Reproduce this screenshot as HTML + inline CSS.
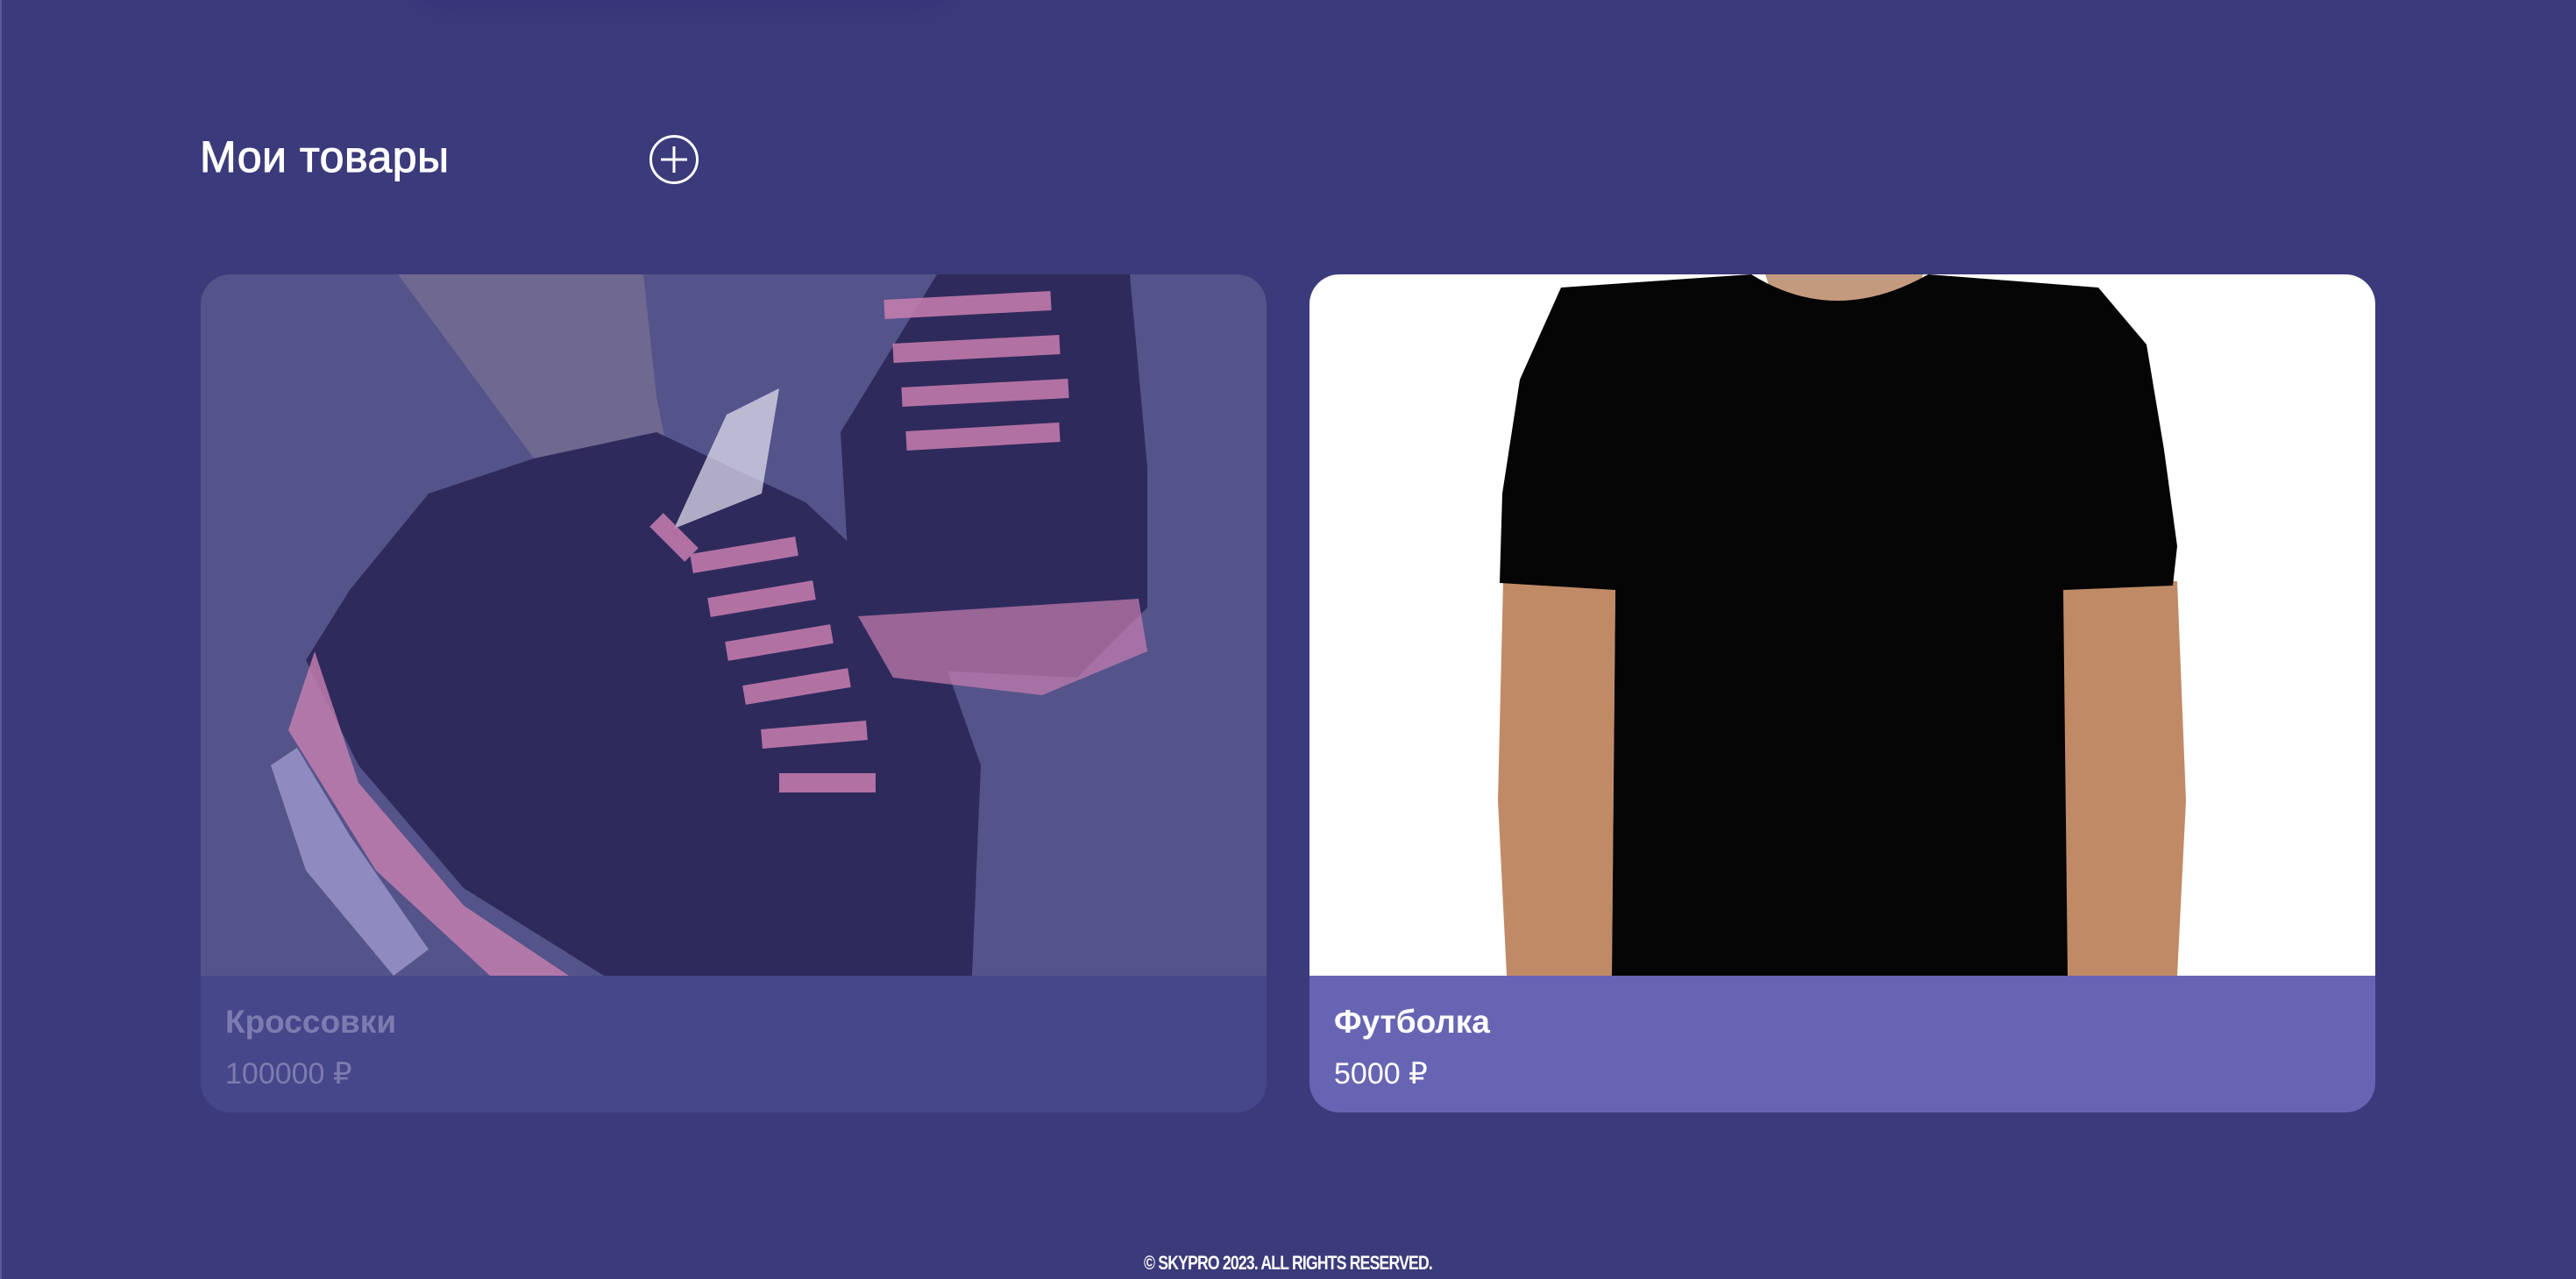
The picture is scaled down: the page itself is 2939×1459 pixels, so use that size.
<!DOCTYPE html>
<html><head><meta charset="utf-8"><style>
*{margin:0;padding:0;box-sizing:border-box}
body{width:2939px;height:1459px;background:#3b3a7b;font-family:"Liberation Sans",sans-serif;position:relative;overflow:hidden}
.edge{position:absolute;left:0;top:0;width:2px;height:1459px;background:#5a5a9a}
.top{position:absolute;left:470px;top:-40px;width:620px;height:50px;border-radius:30px;background:#363579;filter:blur(12px)}
h1{position:absolute;left:228px;top:150px;font-size:50px;font-weight:400;color:#fff;-webkit-text-stroke:1px #fff;letter-spacing:0.5px}
.plus{position:absolute;left:740px;top:153px}
.card{position:absolute;top:313px;width:1216px;height:956px;border-radius:34px;overflow:hidden}
.card svg{display:block}
.info{position:absolute;left:0;top:800px;width:100%;height:156px;padding-left:28px}
.name{position:absolute;left:28px;top:32px;font-size:37px;font-weight:700}
.price{position:absolute;left:28px;top:92px;font-size:34px}
.foot{position:absolute;left:0;width:100%;top:1428px;text-align:center;color:#fff;font-weight:700;font-size:22px;letter-spacing:-1px;transform:scaleX(.8)}
</style></head><body>
<div class="edge"></div>
<div class="top"></div>
<h1>Мои товары</h1>
<svg class="plus" width="58" height="58" viewBox="0 0 58 58"><circle cx="29" cy="29" r="26.5" fill="none" stroke="#fff" stroke-width="3"/><path d="M29 14V44M14 29H44" stroke="#fff" stroke-width="3"/></svg>

<div class="card" style="left:229px">
<svg width="1216" height="800" viewBox="0 0 1216 800">
<rect width="1216" height="800" fill="#55548a"/>
<path d="M225 0H505L520 140L540 240L440 300L395 230Z" fill="#6f6891"/>
<path d="M170 360L260 250L380 210L520 180L690 260L830 390L890 560L880 800H460L300 700L180 560L120 440Z" fill="#2e2a5c"/>
<path d="M600 160L660 130L640 250L540 290Z" fill="#e8e4f2" opacity=".7"/>
<path d="M130 430L180 580L300 720L420 800H330L200 680L100 520Z" fill="#c97fb0" opacity=".8"/>
<path d="M110 540L170 640L260 770L220 800L120 680L80 560Z" fill="#8f8bc0"/>
<path d="M730 180L840 0H1060L1080 220L1080 380L1000 460L800 450L740 350Z" fill="#2e2a5c"/>
<path d="M780 40L970 30M790 90L980 80M800 140L990 130M805 190L980 180" stroke="#c97fb0" stroke-width="22" opacity=".85"/>
<path d="M750 390L1070 370L1080 430L960 480L790 460Z" fill="#c97fb0" opacity=".7"/>
<path d="M520 280L560 320M560 330L680 310M580 380L700 360M600 430L720 410M620 480L740 460M640 530L760 520M660 580L770 580" stroke="#c97fb0" stroke-width="22" opacity=".85"/>
</svg>
<div class="info" style="background:#46468a"><div class="name" style="color:#7d7cb0">Кроссовки</div><div class="price" style="color:#7d7cb0">100000 ₽</div></div>
</div>

<div class="card" style="left:1494px">
<svg width="1216" height="800" viewBox="0 0 1216 800">
<rect width="1216" height="800" fill="#fff"/>
<path d="M221 350L349 350L345 800L225 800L215 600Z" fill="#c08a66"/>
<path d="M853 350L990 350L1000 600L990 800L865 800Z" fill="#c08a66"/>
<path d="M520 0H700L690 30L610 46L530 30Z" fill="#c49a7e"/>
<path d="M287 15L504 0Q600 60 706 0L900 15L955 80L975 200L990 310L985 355L860 360L865 800H345L349 360L217 352L220 250L240 120Z" fill="#050505"/>
</svg>
<div class="info" style="background:#6765b3"><div class="name" style="color:#fff">Футболка</div><div class="price" style="color:#fff">5000 ₽</div></div>
</div>

<div class="foot">© SKYPRO 2023. ALL RIGHTS RESERVED.</div>
</body></html>
